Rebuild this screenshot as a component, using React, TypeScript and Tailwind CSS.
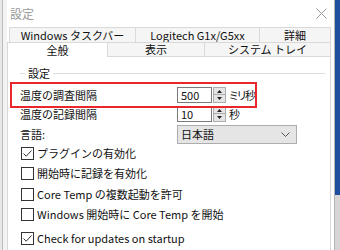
const Spinner = () => (
  <div className="flex flex-col w-[13px] h-[16px] ml-[1px]">
    <div className="h-[8px] bg-[#e5e5e5] border border-[#adadad] flex items-center justify-center">
      <svg width="5" height="3" viewBox="0 0 5 3"><path d="M2.5 0 L5 3 L0 3 Z" fill="#222" /></svg>
    </div>
    <div className="h-[8px] bg-[#e5e5e5] border border-t-0 border-[#adadad] flex items-center justify-center">
      <svg width="5" height="3" viewBox="0 0 5 3"><path d="M0 0 L5 0 L2.5 3 Z" fill="#222" /></svg>
    </div>
  </div>
);

const Check = ({ checked, label, className }: { checked?: boolean; label: string; className: string }) => (
  <div className={"flex items-center h-[16px] pl-[13px] " + className}>
    <div className="w-[13px] h-[13px] border border-[#333] bg-white flex items-center justify-center">
      {checked && (
        <svg width="11" height="11" viewBox="0 0 11 11">
          <path d="M1.5 5.5 L4.2 8.2 L9.5 2.5" fill="none" stroke="#333" strokeWidth="1" />
        </svg>
      )}
    </div>
    <span className="ml-[3px] whitespace-nowrap">{label}</span>
  </div>
);

export default function App() {
  return (
    <div className="relative w-[340px] h-[250px] overflow-hidden flex bg-[#f0f0f0] text-[11px] leading-[15px] text-[#111] font-['Noto_Sans_CJK_JP',sans-serif]">
      {/* left frame */}
      <div className="w-[7px] flex">
        <div className="w-[2px] bg-[#e8e8e8]" />
        <div className="w-[1px] bg-[#bdbdbd]" />
        <div className="flex-1 bg-[#f3f3f3]" />
      </div>

      {/* dialog */}
      <div className="w-[328px] bg-white border-r border-[#b5b5b5] flex flex-col">
        <div className="h-[27px] flex items-center justify-between pl-[3px] pr-[7px]">
          <span className="text-[#9a9a9a] text-[12px]">設定</span>
          <svg width="11" height="11" viewBox="0 0 11 11">
            <path d="M0.5 0.5 L10.5 10.5 M10.5 0.5 L0.5 10.5" stroke="#9a9a9a" strokeWidth="1" />
          </svg>
        </div>

        {/* tabs row 1 */}
        <div className="flex h-[15px] pl-[2px] leading-[13px]">
          <div className="w-[126px] bg-[#f5f5f5] border-t border-l border-[#d9d9d9] flex items-center justify-center">Windows タスクバー</div>
          <div className="w-[124px] bg-[#f5f5f5] border-t border-l border-[#d9d9d9] flex items-center justify-center">Logitech G1x/G5xx</div>
          <div className="w-[72px] bg-[#f5f5f5] border-t border-l border-r border-[#d9d9d9] flex items-center justify-center">詳細</div>
        </div>

        {/* tabs row 2 */}
        <div className="flex h-[15px] leading-[13px]">
          <div className="w-[101px] bg-white border-t border-l border-r border-[#d9d9d9] flex items-center justify-center">全般</div>
          <div className="w-[96px] bg-[#f5f5f5] border-t border-b border-[#d9d9d9] flex items-center justify-center">表示</div>
          <div className="w-[127px] bg-[#f5f5f5] border-t border-l border-r border-b border-[#d9d9d9] flex items-center justify-center">システム トレイ</div>
        </div>

        {/* panel */}
        <div className="flex-1 w-[324px] border-l border-r border-[#d9d9d9] flex flex-col">
          <div className="flex items-center h-[16px] mt-[8px] pl-[12px] pr-[5px]">
            <div className="w-[5px] h-[1px] bg-[#dcdcdc]" />
            <span className="mx-[3px]">設定</span>
            <div className="flex-1 h-[1px] bg-[#dcdcdc]" />
          </div>

          <div className="flex items-center h-[16px] mt-[6px] pl-[12px]">
            <span className="w-[157px]">温度の調査間隔</span>
            <div className="w-[35px] h-[16px] border border-[#7a7a7a] pl-[3px] flex items-center">500</div>
            <Spinner />
            <span className="ml-[3px] [font-feature-settings:'palt'] tracking-[-1px]">ミリ秒</span>
          </div>

          <div className="flex items-center h-[16px] mt-[3px] pl-[12px]">
            <span className="w-[157px]">温度の記録間隔</span>
            <div className="w-[35px] h-[16px] border border-[#7a7a7a] pl-[3px] flex items-center">10</div>
            <Spinner />
            <span className="ml-[3px]">秒</span>
          </div>

          <div className="flex items-center h-[19px] mt-[3px] pl-[12px]">
            <span className="w-[157px]">言語:</span>
            <div className="w-[120px] h-[19px] bg-[#e5e5e5] border border-[#adadad] pl-[3px] pr-[6px] flex items-center justify-between">
              <span>日本語</span>
              <svg width="9" height="5" viewBox="0 0 9 5">
                <path d="M0.5 0.5 L4.5 4.5 L8.5 0.5" fill="none" stroke="#555" strokeWidth="1" />
              </svg>
            </div>
          </div>

          <Check checked label="プラグインの有効化" className="mt-[1px]" />
          <Check label="開始時に記録を有効化" className="mt-[4px]" />
          <Check label="Core Temp の複数起動を許可" className="mt-[5px]" />
          <Check label="Windows 開始時に Core Temp を開始" className="mt-[4px]" />
          <Check checked label="Check for updates on startup" className="mt-[8px]" />
        </div>
      </div>

      {/* desktop edge */}
      <div className="flex-1 flex flex-col">
        <div className="h-[195px] bg-[#1e4f9e]" />
        <div className="flex-1 bg-[#d6d6d6]" />
      </div>

      {/* highlight annotation */}
      <div className="absolute left-[10px] top-[82px] w-[247px] h-[26px] border-2 border-[#e8262b]" />
    </div>
  );
}
